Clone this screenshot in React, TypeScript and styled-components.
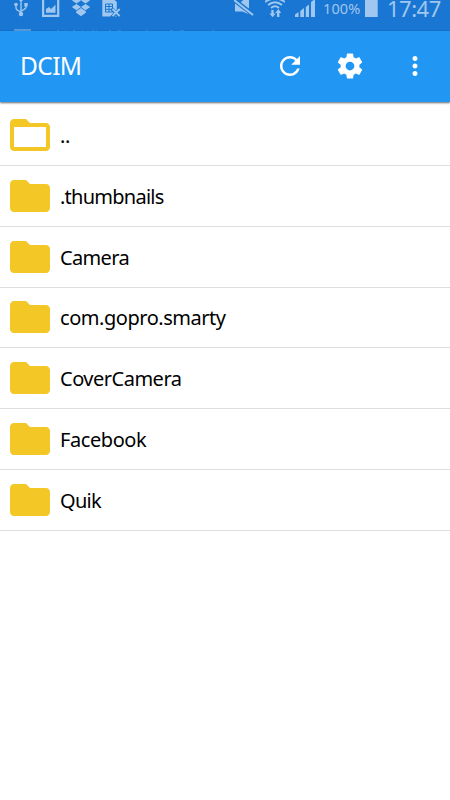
import React from 'react';
import styled, { createGlobalStyle } from 'styled-components';

const Global = createGlobalStyle`
  * { box-sizing: border-box; }
  body { margin: 0; background: #fff; font-family: "Noto Sans", sans-serif; }
`;

const Screen = styled.div`
  width: 450px;
  height: 800px;
  overflow: hidden;
  background: #fff;
`;

const StatusBar = styled.div`
  height: 31px;
  display: flex;
  align-items: flex-start;
  position: relative;
  background: #1976d2;
  color: #a0c7ef;
`;

const StatusIcon = styled.svg<{ $gap: number }>`
  flex: none;
  display: block;
  height: 18px;
  margin-left: ${(p) => p.$gap}px;
  fill: currentColor;
`;

const StatusText = styled.span<{ $size: number; $width: number; $gap: number; $tracking: number }>`
  flex: none;
  width: ${(p) => p.$width}px;
  margin-left: ${(p) => p.$gap}px;
  font-size: ${(p) => p.$size}px;
  line-height: 16px;
  letter-spacing: ${(p) => p.$tracking}px;
  white-space: nowrap;
`;

const Traces = styled.svg`
  position: absolute;
  left: 0;
  bottom: 0;
  fill: #5c9ade;
`;

const AppBar = styled.header`
  height: 70.5px;
  display: flex;
  align-items: center;
  padding: 0 20px;
  background: #2196f3;
  color: #fff;
  box-shadow: 0 1px 2px rgba(0, 0, 0, 0.6);
  position: relative;
`;

const Title = styled.h1`
  margin: 0 auto 0 0;
  font-size: 24.5px;
  line-height: 32px;
  font-weight: 400;
  letter-spacing: -0.6px;
`;

const Action = styled.button`
  width: 30px;
  height: 30px;
  padding: 0;
  border: 0;
  margin: 0 0 0 30px;
  background: none;
  color: inherit;
  &:last-child { margin: 0 0 0 35px; }
  svg { display: block; width: 30px; height: 30px; fill: currentColor; }
`;

const Actions = styled.div`
  display: flex;
`;

const List = styled.ul`
  list-style: none;
  margin: 0;
  padding: 3.5px 0 0;
`;

const Row = styled.li`
  height: 60.85px;
  display: flex;
  align-items: center;
  padding-left: 6px;
  border-bottom: 1px solid #dedede;
`;

const FolderIcon = styled.svg`
  width: 48px;
  height: 48px;
  flex: none;
  fill: #f2c726;
`;

const Name = styled.span<{ $tracking: number }>`
  margin-left: 6px;
  margin-top: 2px;
  font-size: 20px;
  line-height: 28px;
  letter-spacing: ${(p) => p.$tracking}px;
  color: #000;
`;

const folders = [
  { name: '..', open: true, tracking: -0.3 },
  { name: '.thumbnails', tracking: -0.75 },
  { name: 'Camera', tracking: -0.65 },
  { name: 'com.gopro.smarty', tracking: -0.46 },
  { name: 'CoverCamera', tracking: -0.5 },
  { name: 'Facebook', tracking: -0.42 },
  { name: 'Quik', tracking: -0.7 },
];

const FOLDER = 'M10 4H4c-1.1 0-1.99.9-1.99 2L2 18c0 1.1.9 2 2 2h16c1.1 0 2-.9 2-2V8c0-1.1-.9-2-2-2h-8l-2-2z';

export default function App() {
  return (
    <Screen>
      <Global />
      <StatusBar>
        <StatusIcon $gap={14} width="14" viewBox="0 0 14 18">
          <path d="M7 0v14M2 5v3q0 2 5 4M12 4v3q0 2-5 4" fill="none" stroke="currentColor" strokeWidth="1.4" />
          <circle cx="2" cy="4.5" r="1.8" />
          <path d="M10.3 3h3.4v3.4h-3.4z" />
          <circle cx="7" cy="14" r="2.2" />
          <path d="M5 1L7-2l2 3z" />
        </StatusIcon>
        <StatusIcon $gap={14} width="18" viewBox="0 0 18 18">
          <path fillRule="evenodd" d="M0-2h17.3v19H0zM2.2 0v14.8h12.9V0z" />
          <path d="M4 12.8V9l3-2 2 2 4.5-4.2v8z" />
        </StatusIcon>
        <StatusIcon $gap={11} width="20" viewBox="0 0 20 18">
          <path d="M5.5-2.5L10 .6 5.5 3.6 1 .6zM14.5-2.5L19 .6l-4.5 3L10 .6zM5.5 4L10 7l-4.5 3.3L.8 7zM14.5 4l4.7 3-4.7 3.3L10 7zM5.2 11.2L10 8l4.8 3.2v1.6L10 16.3l-4.8-3.5z" />
        </StatusIcon>
        <StatusIcon $gap={11} width="20" viewBox="0 0 20 18">
          <path d="M.3-2h10l4.5 4v14.5H.3z" />
          <path d="M3.5 4h7v8h-7zM7 4v8M3.5 6.5H11M3.5 9.3H11" fill="none" stroke="#1976d2" strokeWidth="1" />
          <path d="M9.5 8.5l9 9M18.5 8.5l-9 9" stroke="#1976d2" strokeWidth="3.6" />
          <path d="M10.5 9l7.2 7.2M17.7 9l-7.2 7.2" stroke="currentColor" strokeWidth="1.9" />
        </StatusIcon>
        <StatusIcon $gap={112} width="22" viewBox="0 0 22 18">
          <path d="M1 2.5h5.5L15-5v18.5H13L8.5 11.5H1z" />
          <path d="M-.5-.5L19 14.5" stroke="#1976d2" strokeWidth="4.4" />
          <path d="M0 0l19 15" stroke="currentColor" strokeWidth="2" />
        </StatusIcon>
        <StatusIcon $gap={9} width="20" viewBox="0 0 20 18">
          <path d="M0 2Q10-5 20 2M3 5q7-5.5 14 0M6 8q4-3.5 8 0" fill="none" stroke="currentColor" strokeWidth="2" />
          <path d="M6.3 10h2.4v3.5h2L7.5 17.3l-3-3.8h1.8zM12 17v-4h-1.8l3.2-4 2.8 4h-1.8v4z" />
        </StatusIcon>
        <StatusIcon $gap={10} width="21" viewBox="0 0 21 18">
          <path d="M0 17v-2.4L3.5 12v5zM5.3 17v-6L9 8v9zM10.8 17V7L14 4.5V17zM16 17V2l4-3v18z" />
        </StatusIcon>
        <StatusText $gap={7} $width={42} $size={14.5} $tracking={0.1}>100%</StatusText>
        <StatusIcon $gap={0} width="13" viewBox="0 0 13 18"><path d="M0 0h12.7v17H0z" /></StatusIcon>
        <StatusText $gap={9} $width={56} $size={22} $tracking={-0.5}>17:47</StatusText>
        <Traces width="220" height="2">
          <path d="M14 0h17v2H14z" />
          <path d="M57 1h2v1h-2zM65 1h1v1h-1zM73 1h2v1h-2zM82 1h1v1h-1zM92 1h2v1h-2zM96 1h1v1h-1zM109 1h2v1h-2zM118 1h3v1h-3zM146 1h2v1h-2zM170 1h3v1h-3zM180 1h4v1h-4zM212 1h2v1h-2z" opacity=".5" />
        </Traces>
      </StatusBar>
      <AppBar>
        <Title>DCIM</Title>
        <Actions>
          <Action aria-label="Refresh"><svg viewBox="0 0 24 24"><path d="M17.65 6.35C16.2 4.9 14.21 4 12 4c-4.42 0-7.99 3.58-7.99 8s3.57 8 7.99 8c3.73 0 6.84-2.55 7.73-6h-2.08c-.82 2.33-3.04 4-5.65 4-3.31 0-6-2.69-6-6s2.69-6 6-6c1.66 0 3.14.69 4.22 1.78L13 11h7V4l-2.35 2.35z" /></svg></Action>
          <Action aria-label="Settings"><svg viewBox="0 0 24 24"><path d="M19.43 12.98c.04-.32.07-.64.07-.98s-.03-.66-.07-.98l2.11-1.65c.19-.15.24-.42.12-.64l-2-3.46c-.12-.22-.39-.3-.61-.22l-2.49 1c-.52-.4-1.08-.73-1.69-.98l-.38-2.65C14.46 2.18 14.25 2 14 2h-4c-.25 0-.46.18-.49.42l-.38 2.65c-.61.25-1.17.59-1.69.98l-2.49-1c-.23-.09-.49 0-.61.22l-2 3.46c-.13.22-.07.49.12.64l2.11 1.65c-.04.32-.07.65-.07.98s.03.66.07.98l-2.11 1.65c-.19.15-.24.42-.12.64l2 3.46c.12.22.39.3.61.22l2.49-1c.52.4 1.08.73 1.69.98l.38 2.65c.03.24.24.42.49.42h4c.25 0 .46-.18.49-.42l.38-2.65c.61-.25 1.17-.59 1.69-.98l2.49 1c.23.09.49 0 .61-.22l2-3.46c.12-.22.07-.49-.12-.64l-2.11-1.65zM12 15.5c-1.93 0-3.5-1.57-3.5-3.5s1.57-3.5 3.5-3.5 3.5 1.57 3.5 3.5-1.57 3.5-3.5 3.5z" /></svg></Action>
          <Action aria-label="More options"><svg viewBox="0 0 24 24"><path d="M12 8c1.1 0 2-.9 2-2s-.9-2-2-2-2 .9-2 2 .9 2 2 2zm0 2c-1.1 0-2 .9-2 2s.9 2 2 2 2-.9 2-2-.9-2-2-2zm0 6c-1.1 0-2 .9-2 2s.9 2 2 2 2-.9 2-2-.9-2-2-2z" /></svg></Action>
        </Actions>
      </AppBar>
      <List>
        {folders.map((f) => (
          <Row key={f.name}>
            <FolderIcon viewBox="0 0 24 24">
              <path fillRule="evenodd" d={FOLDER + (f.open ? 'M4 8h16v10H4z' : '')} />
            </FolderIcon>
            <Name $tracking={f.tracking}>{f.name}</Name>
          </Row>
        ))}
      </List>
    </Screen>
  );
}
